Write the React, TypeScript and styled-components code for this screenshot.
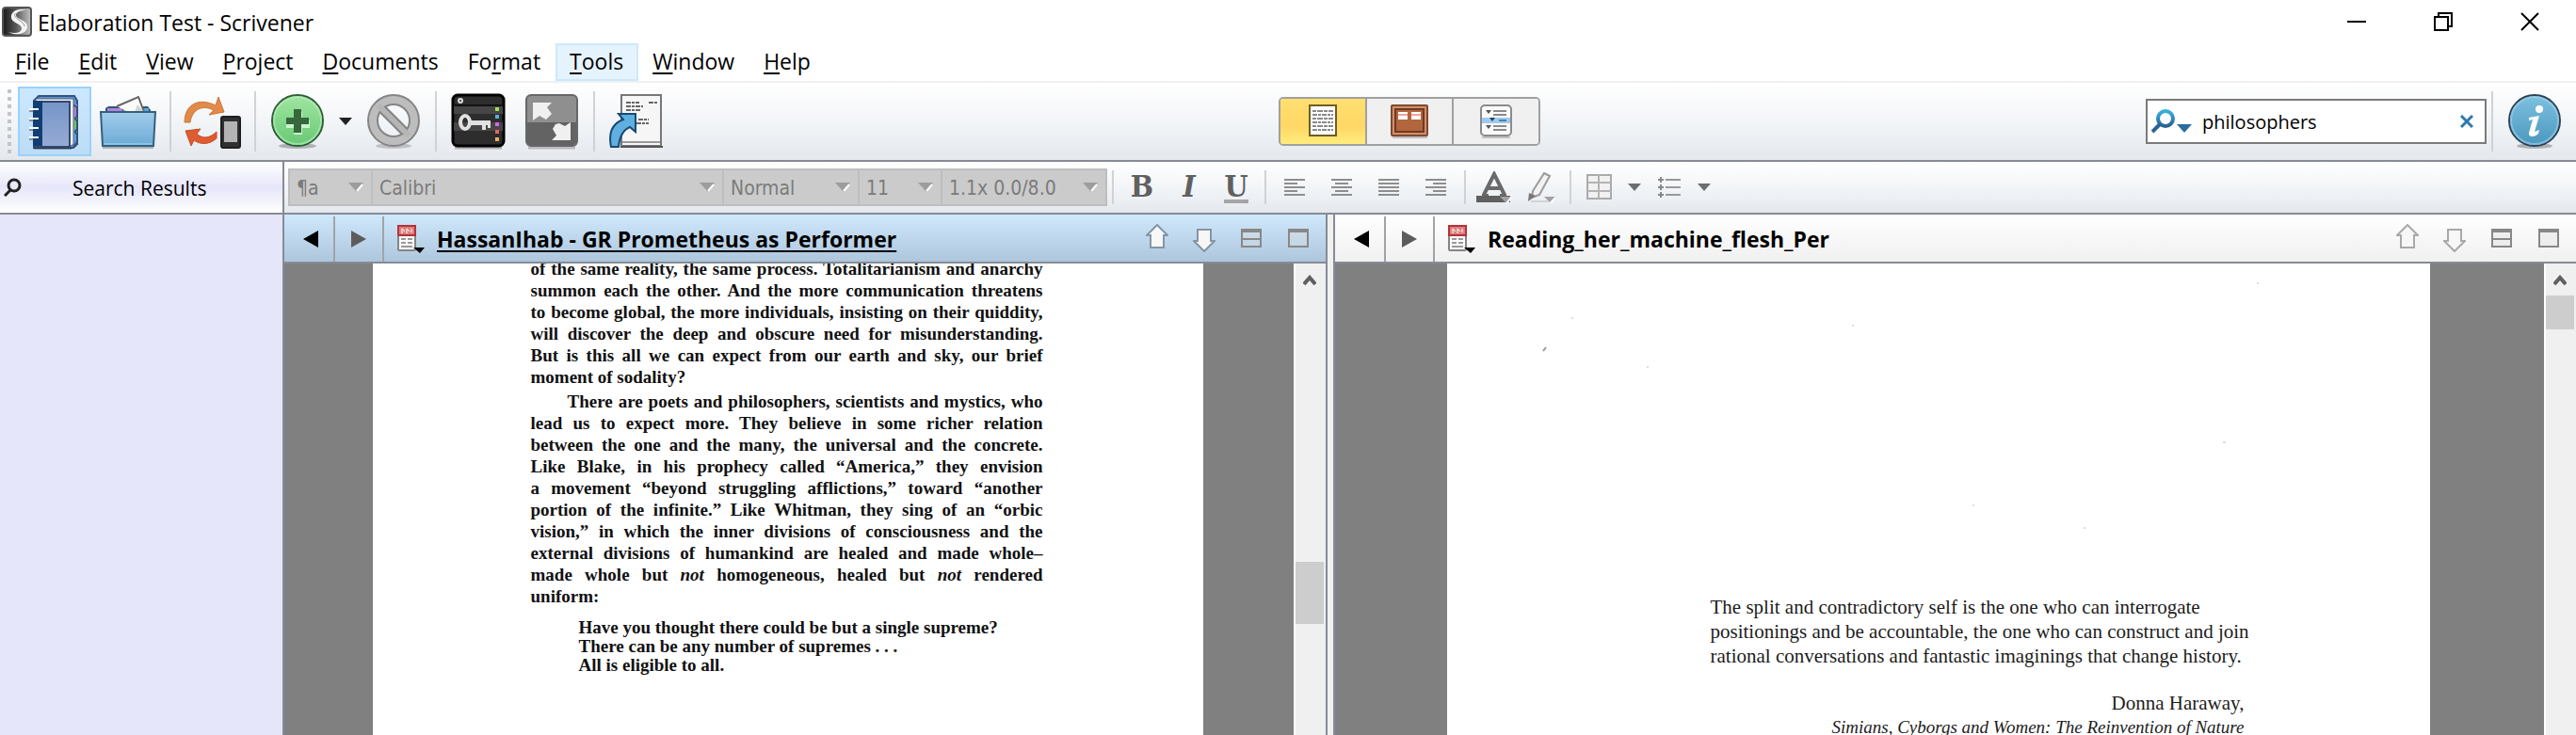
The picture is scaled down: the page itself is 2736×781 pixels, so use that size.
import React from 'react';
import styled, { createGlobalStyle, css } from 'styled-components';

const LINE = '#868b96';
const UI = '"Open Sans", "Noto Sans", sans-serif';
const NARROW = '"DejaVu Sans Condensed", "DejaVu Sans", sans-serif';
const SERIF = '"Liberation Serif", serif';

const GlobalStyle = createGlobalStyle`
  *, *::before, *::after { box-sizing: border-box; }
  html, body, #root { height: 100%; }
  body { margin: 0; background: #fff; color: #000; font-family: ${UI}; font-size: 23px; overflow: hidden; }
  button { border: 0; padding: 0; background: none; color: inherit; font: inherit; }
  svg { display: block; }
`;

const Window = styled.div`
  display: flex;
  flex-direction: column;
  height: 100vh;
`;

/* ---------- title bar and menus ---------- */

const TitleBar = styled.header`
  display: flex;
  align-items: center;
  height: 46px;
  padding: 0 3px 0 2px;
`;

const WindowTitle = styled.h1`
  flex: 1;
  margin: 0 0 0 6px;
  padding-top: 2px;
  font-size: 23px;
  font-weight: 400;
  line-height: 44px;
`;

const WindowButton = styled.button`
  display: grid;
  place-items: center;
  width: 92px;
  height: 44px;
`;

const MenuBar = styled.nav`
  display: flex;
  height: 42px;
  padding-left: 1px;
  border-bottom: 2px solid #f0f0f0;
`;

const MenuButton = styled.button<{ $active?: boolean }>`
  height: 40px;
  padding: 0 14px 2px 13px;
  border: 2px solid ${p => (p.$active ? '#cce8ff' : 'transparent')};
  background: ${p => (p.$active ? '#e5f3ff' : 'transparent')};
  line-height: 34px;

  u {
    text-decoration-thickness: 2px;
    text-underline-offset: 3px;
  }
`;

/* ---------- main toolbar ---------- */

const barFill = css`
  background: linear-gradient(#ffffff, #f1f4f7 55%, #e4e8ed);
  border-bottom: 2px solid ${LINE};
`;

const Toolbar = styled.div`
  ${barFill}
  display: flex;
  align-items: center;
  justify-content: space-between;
  height: 84px;
  padding: 0 8px;
`;

const ToolGroup = styled.div`
  display: flex;
  align-items: center;
`;

const Grip = styled.span`
  width: 4px;
  height: 68px;
  margin-right: 7px;
  background: repeating-linear-gradient(#c3c5c8 0 4px, transparent 4px 8px);
`;

const ToolButton = styled.button<{ $active?: boolean }>`
  display: grid;
  place-items: center;
  width: 78px;
  height: 74px;
  ${p =>
    p.$active &&
    css`
      border: 2px solid #99d1ff;
      background: linear-gradient(#cce8ff, #bcdcf5);
    `}
`;

const CaretButton = styled.button`
  display: grid;
  place-items: center;
  width: 24px;
  height: 40px;
`;

const Divider = styled.span<{ $tall?: boolean }>`
  width: 2px;
  height: ${p => (p.$tall ? 64 : 36)}px;
  margin: 0 5px;
  background: #d0d2d5;
`;

const ViewSwitch = styled.div`
  display: flex;
  height: 52px;
  border: 2px solid #a0a0a0;
  border-radius: 5px;
  overflow: hidden;
`;

const ViewButton = styled.button<{ $active?: boolean }>`
  display: grid;
  place-items: center;
  width: 92px;
  background: ${p => (p.$active ? 'linear-gradient(#ffe070, #ffd766 60%, #ffec7c)' : '#f0f0f0')};

  & + & {
    border-left: 2px solid #a0a0a0;
  }

  &:first-child {
    width: 90px;
  }
`;

const SearchBox = styled.label`
  display: flex;
  align-items: center;
  width: 362px;
  height: 48px;
  padding: 0 12px 0 4px;
  border: 2px solid #7a7a7a;
  background: #fff;
`;

const SearchInput = styled.input`
  flex: 1;
  min-width: 0;
  margin-left: 10px;
  padding: 2px 0 0;
  border: 0;
  outline: 0;
  background: none;
  color: #000;
  font: 20px/28px ${UI};
`;

const InfoButton = styled.button`
  display: grid;
  place-items: center;
  width: 56px;
  height: 60px;
  margin: 0 8px 0 11px;
`;

/* ---------- workspace ---------- */

const Workspace = styled.div`
  display: flex;
  flex: 1;
  min-height: 0;
`;

const Sidebar = styled.aside`
  flex: 0 0 302px;
  border-right: 2px solid ${LINE};
  background: #e6e6fa;
`;

const SidebarHeader = styled.div`
  display: flex;
  align-items: center;
  height: 56px;
  padding-left: 4px;
  border-bottom: 2px solid ${LINE};
  background: linear-gradient(#ffffff, #e6e6fa 50%, #ffffff);
`;

const SidebarTitle = styled.h2`
  margin: 0 0 0 54px;
  padding-top: 2px;
  font-size: 21px;
  font-weight: 400;
  line-height: 28px;
`;

const Main = styled.main`
  display: flex;
  flex: 1;
  flex-direction: column;
  min-width: 0;
`;

const FormatBar = styled.div`
  ${barFill}
  display: flex;
  align-items: center;
  height: 56px;
  padding-left: 4px;
`;

const Combos = styled.div`
  display: flex;
  height: 40px;
  border: 2px solid #bebebe;
  background: #cbcbcb;
`;

const Combo = styled.label<{ $width: number }>`
  display: grid;
  align-items: center;
  width: ${p => p.$width}px;

  & + & {
    border-left: 2px solid #bebebe;
  }

  > * {
    grid-area: 1 / 1;
  }

  > svg {
    justify-self: end;
    margin-right: 8px;
    pointer-events: none;
  }
`;

const Select = styled.select`
  width: 100%;
  height: 36px;
  padding: 2px 0 0 7px;
  border: 0;
  background: none;
  appearance: none;
  color: #7b7b7b;
  opacity: 1;
  font: 21px/34px ${NARROW};
`;

const FormatButton = styled.button`
  display: grid;
  place-items: center;
  width: 50px;
  height: 40px;
  color: #8a8a8a;
`;

const Letter = styled.span<{ $italic?: boolean; $underline?: boolean }>`
  height: 34px;
  border-bottom: 4px solid ${p => (p.$underline ? '#a5a5a5' : 'transparent')};
  color: #606060;
  font: ${p => (p.$italic ? 'italic' : 'normal')} bold 32px/32px 'DejaVu Serif Condensed', 'DejaVu Serif', serif;
`;

/* ---------- editor panes ---------- */

const Panes = styled.div`
  display: flex;
  flex: 1;
  min-height: 0;
`;

const Splitter = styled.div`
  flex: 0 0 10px;
  border: solid ${LINE};
  border-width: 0 2px;
  background: #f0f0f0;
`;

const PaneBox = styled.section<{ $grow: number }>`
  display: flex;
  flex: ${p => p.$grow} 1 0;
  flex-direction: column;
  min-width: 0;
`;

const PaneHeader = styled.div<{ $active?: boolean }>`
  display: flex;
  align-items: center;
  flex: 0 0 52px;
  padding-right: 4px;
  border-bottom: 2px solid ${LINE};
  background: ${p => (p.$active ? 'linear-gradient(#cfe8fc, #adc6dc)' : 'linear-gradient(#ffffff, #f0f0f0)')};
`;

const NavButton = styled.button`
  display: grid;
  place-items: center;
  width: 52px;
  height: 48px;
  margin-top: 2px;
  border-right: 2px solid #a0a4a8;

  &:first-child {
    width: 54px;
    padding-left: 4px;
  }
`;

const DocButton = styled.button`
  margin-left: 13px;
`;

const PaneTitle = styled.h2<{ $active?: boolean }>`
  flex: 1;
  min-width: 0;
  margin: 0 0 0 13px;
  padding-top: 2px;
  overflow: hidden;
  font-size: 23px;
  font-weight: 700;
  line-height: 40px;
  white-space: nowrap;
  text-decoration: ${p => (p.$active ? 'underline 2px' : 'none')};
  text-underline-offset: 3px;
  text-decoration-skip-ink: none;
`;

const PaneButton = styled.button`
  display: grid;
  place-items: center;
  width: 50px;
  height: 44px;
`;

const PaneBody = styled.div`
  display: flex;
  flex: 1;
  min-height: 0;
  background: #808080;
`;

const Desk = styled.div`
  display: flex;
  flex: 1;
  justify-content: center;
  min-width: 0;
  padding-right: 3px;
  overflow: hidden;
`;

const ScrollTrack = styled.div`
  flex: 0 0 34px;
  padding-top: 12px;
  border-left: 2px solid #fff;
  background: #f0f0f0;

  > svg {
    margin-left: 8px;
  }
`;

const ScrollThumb = styled.div<{ $gap: number; $size: number }>`
  width: 30px;
  height: ${p => p.$size}px;
  margin-top: ${p => p.$gap}px;
  background: #cdcdcd;
`;

const EssayPage = styled.article`
  width: 882px;
  padding: 0 170px 0 168px;
  background: #fff;
  color: #111;
  font: bold 19px/23px ${SERIF};
`;

const EssayParagraph = styled.p<{ $indent?: boolean }>`
  margin: ${p => (p.$indent ? '3px 0 0' : '-6px 0 0')};
  text-indent: ${p => (p.$indent ? 39 : 0)}px;
`;

const EssayLine = styled.span`
  display: block;
  text-align: justify;
  text-align-last: justify;
  white-space: nowrap;

  & + & {
    text-indent: 0;
  }

  &:last-child {
    text-align-last: left;
  }
`;

const Verse = styled.blockquote`
  margin: 12px 0 0 51px;
  line-height: 20px;
  white-space: pre-line;
`;

const ScanPage = styled.article`
  position: relative;
  width: 1044px;
  padding: 352px 197px 0 280px;
  background: #fff;
  color: #1c1c1c;
  font: 21px/26px ${SERIF};
`;

const Dust = styled.svg`
  position: absolute;
  inset: 0;
`;

const Epigraph = styled.p`
  margin: 0;
  white-space: pre;
`;

const Attribution = styled.footer`
  margin-top: 24px;
  text-align: right;
  white-space: nowrap;

  cite {
    display: block;
    font-size: 19px;
  }
`;

/* ---------- icons ---------- */

const AppIcon = () => (
  <svg width="32" height="32" viewBox="0 0 32 32">
    <defs>
      <linearGradient id="app" x1="0" y1="0" x2="1" y2="0">
        <stop offset="0" stopColor="#1a1a1a" />
        <stop offset="0.45" stopColor="#555" />
        <stop offset="1" stopColor="#c4c4c4" />
      </linearGradient>
    </defs>
    <rect x="1" y="1" width="30" height="30" rx="3" fill="url(#app)" stroke="#555" strokeWidth="2" />
    <path d="M26 4C16 1 9 6 10 12c1 6 12 6 11 12-1 4-7 5-14 3 7 4 19 3 20-5 1-8-12-8-12-13 0-4 6-5 11-5z" fill="#f4f4f4" />
    <path d="M14 7c-3 6 10 8 10 14" stroke="#999" fill="none" />
  </svg>
);

const Caret = ({ color = '#222', w = 14 }: { color?: string; w?: number }) => (
  <svg width={w} height="8" viewBox="0 0 14 8">
    <path d="M0 0h14L7 8z" fill={color} />
  </svg>
);

const ComboCaret = () => (
  <svg width="16" height="12" viewBox="0 0 16 12">
    <path d="M0 1h16L9 11z" fill="#9d9d9d" />
    <path d="M15 3L9 10" stroke="#fff" strokeWidth="2" />
  </svg>
);

const NotebookIcon = () => (
  <svg width="56" height="60" viewBox="0 0 56 60">
    <defs>
      <linearGradient id="nb" x1="0" y1="0" x2="0" y2="1">
        <stop offset="0" stopColor="#7695c9" />
        <stop offset="1" stopColor="#96abd4" />
      </linearGradient>
    </defs>
    <path d="M6 8l5-5h38l3 5v46l-4 4H6z" fill="#5d93d6" stroke="#36517a" strokeWidth="2" />
    <path d="M48 12h4v14h-4z" fill="#b07fd8" />
    <path d="M48 26h4v12h-4z" fill="#74c463" />
    <path d="M48 38h4v12h-4z" fill="#58a6e0" />
    <path d="M47 12l5 3v9l-2 3 2 3v8l-2 3 2 3v8l-4 5" fill="none" stroke="#35516f" strokeWidth="2" />
    <path d="M8 6h40v48l-4 3H8z" fill="#f7f7f7" stroke="#4a6080" />
    <rect x="6" y="9" width="38" height="48" fill="url(#nb)" stroke="#33486d" strokeWidth="2" />
    <rect x="5" y="8" width="10" height="48" fill="#123f73" />
    {[17, 27, 37, 47].map(y => (
      <path key={y} d={`M1 ${y}h10`} stroke="#fff" strokeWidth="2" />
    ))}
    {[19, 29, 39, 49].map(y => (
      <path key={y} d={`M1 ${y}h5`} stroke="#444" strokeWidth="1" />
    ))}
    <path d="M6 59h40" stroke="#000" strokeOpacity="0.3" strokeWidth="2" />
  </svg>
);

const FolderIcon = () => (
  <svg width="60" height="60" viewBox="0 0 60 60">
    <defs>
      <linearGradient id="fold" x1="0" y1="0" x2="0" y2="1">
        <stop offset="0" stopColor="#a3cdea" />
        <stop offset="1" stopColor="#6baad6" />
      </linearGradient>
    </defs>
    <path d="M6 20v-4l3-2h42l3 4v4H6z" fill="#2c5878" />
    <path d="M8 16h16v5H8z" fill="#b381e0" />
    <path d="M25 16h14v5H25z" fill="#86cf78" />
    <path d="M42 16h10v5H42z" fill="#5aa6dd" />
    <path d="M18 14L41 4l6 16H31z" fill="#fbfbfb" />
    <path d="M18 14L41 4l6 16" fill="none" stroke="#666" strokeWidth="2" />
    <path d="M37 20l3-8 7 8z" fill="#d4d4d4" />
    <path d="M1 20h58l-2 36H3z" fill="url(#fold)" stroke="#35607f" strokeWidth="2" />
    <path d="M4 54h52" stroke="#86c3e8" strokeWidth="2" />
    <path d="M3 58h54" stroke="#000" strokeOpacity="0.25" strokeWidth="2" />
  </svg>
);

const SyncIcon = () => (
  <svg width="62" height="60" viewBox="0 0 62 60">
    <path d="M1 31C1 12 16 4 34 13l3-9 6 16-16 3 5-5C20 12 9 17 7 31z" fill="#e28a49" stroke="#cc7638" />
    <path d="M2 40l16-2-4 5c6 6 14 5 21-2v7c-8 7-17 7-24 2l-3 6z" fill="#df5b32" stroke="#c94a25" />
    <rect x="40" y="25" width="20" height="33" rx="2" fill="#303030" stroke="#1f1f1f" strokeWidth="2" />
    <rect x="43" y="30" width="14" height="22" fill="#b4b4b4" />
  </svg>
);

const AddIcon = () => (
  <svg width="58" height="60" viewBox="0 0 58 60">
    <defs>
      <linearGradient id="add" x1="0" y1="0" x2="0" y2="1">
        <stop offset="0" stopColor="#a0e6a2" />
        <stop offset="1" stopColor="#68c874" />
      </linearGradient>
    </defs>
    <ellipse cx="29" cy="56" rx="20" ry="3" fill="#000" opacity="0.25" />
    <circle cx="29" cy="29" r="27" fill="url(#add)" stroke="#2f5e38" strokeWidth="2" />
    <circle cx="29" cy="29" r="25" fill="none" stroke="#b9f0bc" strokeWidth="2" opacity="0.6" />
    <path d="M25 20h9v9h8v8h-8v7h-9v-7h-8v-8h8z" fill="#c7f5cf" />
    <path d="M25 17h8v9h8v7h-8v9h-8v-9h-8v-7h8z" fill="#38673b" />
  </svg>
);

const BanIcon = () => (
  <svg width="58" height="60" viewBox="0 0 58 60">
    <ellipse cx="29" cy="56" rx="19" ry="3" fill="#000" opacity="0.18" />
    <g fill="none">
      <circle cx="29" cy="29" r="22" stroke="#858585" strokeWidth="12" />
      <path d="M14 14l30 30" stroke="#858585" strokeWidth="10" />
      <circle cx="29" cy="29" r="22" stroke="#bdbdbd" strokeWidth="8" />
      <path d="M13 13l32 32" stroke="#b5b5b5" strokeWidth="6" />
    </g>
  </svg>
);

const KeywordsIcon = () => (
  <svg width="58" height="60" viewBox="0 0 58 60">
    <path d="M4 58h50" stroke="#000" strokeOpacity="0.25" strokeWidth="3" />
    <rect x="2" y="2" width="54" height="54" rx="5" fill="#2d2d2d" stroke="#000" strokeWidth="3" />
    <path d="M3 13h52v9H3zM3 31h52v9H3z" fill="#464646" />
    <path d="M3 13h52" stroke="#111" strokeWidth="2" />
    <circle cx="10" cy="8" r="2" fill="none" stroke="#ddd" strokeWidth="2" />
    <ellipse cx="15" cy="31" rx="5" ry="7" fill="none" stroke="#e2e2e2" strokeWidth="4" />
    <path d="M20 29h22v8h-3v-3h-2v5h-4v-5H20z" fill="#e2e2e2" />
    {['#9fdc59', '#5aaee6', '#d467e8', '#ee6060', '#ecb05a'].map((c, i) => (
      <rect key={c} x="47" y={15 + i * 8} width="4" height="4" fill={c} />
    ))}
  </svg>
);

const FullScreenIcon = () => (
  <svg width="58" height="60" viewBox="0 0 58 60">
    <path d="M4 58h50" stroke="#000" strokeOpacity="0.2" strokeWidth="3" />
    <rect x="2" y="2" width="54" height="54" rx="5" fill="#8f8f8f" stroke="#676767" strokeWidth="2" />
    <path d="M3 31h52v22l-3 2H5l-2-2z" fill="#636363" />
    <path d="M9 10h20l-5 5 5 7-6 6-7-4-7 5z" fill="#f0f0f0" />
    <path d="M49 50H29l5-5-4-7 3-5 4-1 6 3 6-4z" fill="#f0f0f0" />
  </svg>
);

const ComposeIcon = () => (
  <svg width="60" height="60" viewBox="0 0 60 60">
    <rect x="14" y="2" width="42" height="54" fill="#f6f6f6" stroke="#777" strokeWidth="2" />
    <path d="M15 52h40" stroke="#999" strokeWidth="2" />
    <path d="M13 57h45" stroke="#555" strokeWidth="2" />
    <path d="M19 10h14M43 10h9M19 14h18M19 18h15M32 28h11M30 32h13" stroke="#666" strokeWidth="2" strokeDasharray="5 1 3 1" />
    <path d="M3 57C0 42 5 32 16 28l-5-6h18v19l-6-5c-7 3-11 10-12 21z" fill="#5fb0e0" stroke="#174a75" strokeWidth="2" />
  </svg>
);

const DocumentViewIcon = () => (
  <svg width="32" height="36" viewBox="0 0 32 36">
    <rect x="2" y="1" width="28" height="32" fill="#fff" stroke="#6f5d22" strokeWidth="2" />
    {[7, 11, 15, 19, 23, 27].map((y, i) => (
      <path key={y} d={`M5 ${y}h22`} stroke="#8a8a8a" strokeWidth="2" strokeDasharray={i % 2 ? '5 1 3 1' : '4 1 6 1'} />
    ))}
  </svg>
);

const CorkboardIcon = () => (
  <svg width="40" height="36" viewBox="0 0 40 36">
    <rect x="1" y="1" width="38" height="32" rx="1" fill="#d48d6a" stroke="#7c4a33" strokeWidth="2" />
    <rect x="5" y="5" width="30" height="24" fill="#b2663d" stroke="#6e3a22" strokeWidth="2" />
    <path d="M8 8h10v8H8zM22 8h10v8H22z" fill="#fff" />
    <path d="M8 11h10M22 11h10" stroke="#eda5a0" strokeWidth="2" />
    <path d="M2 35h37" stroke="#000" strokeOpacity="0.2" strokeWidth="2" />
  </svg>
);

const OutlineIcon = () => (
  <svg width="34" height="36" viewBox="0 0 34 36">
    <rect x="1" y="1" width="32" height="32" rx="4" fill="#fafafa" stroke="#8b8b8b" strokeWidth="2" />
    <rect x="2" y="14" width="30" height="6" fill="#9ccbf0" />
    <path d="M6 6h6l-3 4zM6 22h6l-3 4z" fill="#555" />
    <path d="M10 14h6l-3 4z" fill="#27405c" />
    <path d="M14 7h14M14 11h14M14 23h14M14 27h14" stroke="#8a8a8a" strokeWidth="2" />
    <path d="M20 17h8" stroke="#5a7f9e" strokeWidth="2" />
    <path d="M2 35h30" stroke="#000" strokeOpacity="0.2" strokeWidth="2" />
  </svg>
);

const SearchIcon = () => (
  <svg width="44" height="28" viewBox="0 0 44 28">
    <defs>
      <linearGradient id="lens" x1="0" y1="0" x2="0" y2="1">
        <stop offset="0" stopColor="#36b0de" />
        <stop offset="1" stopColor="#2a6293" />
      </linearGradient>
    </defs>
    <circle cx="15" cy="11" r="8" fill="none" stroke="url(#lens)" strokeWidth="4" />
    <path d="M9 17l-8 8" stroke="#2a6293" strokeWidth="4" />
    <path d="M27 17h16l-8 9z" fill="#2a6ca0" />
  </svg>
);

const ClearIcon = () => (
  <svg width="14" height="14" viewBox="0 0 14 14">
    <path d="M1 1l12 12M13 1L1 13" stroke="#2f78ac" strokeWidth="3" />
  </svg>
);

const InfoIcon = () => (
  <svg width="56" height="58" viewBox="0 0 56 58">
    <defs>
      <linearGradient id="info" x1="0" y1="0" x2="0" y2="1">
        <stop offset="0" stopColor="#7fc1e0" />
        <stop offset="1" stopColor="#4a97be" />
      </linearGradient>
    </defs>
    <ellipse cx="28" cy="55" rx="19" ry="3" fill="#000" opacity="0.25" />
    <circle cx="28" cy="28" r="27" fill="url(#info)" stroke="#2e4257" strokeWidth="2" />
    <circle cx="28" cy="28" r="25" fill="none" stroke="#a3d5ec" strokeWidth="2" opacity="0.6" />
    <circle cx="33" cy="16" r="4" fill="#fff" />
    <path d="M22 25l11-2-5 17 5-2-1 4c-4 4-11 4-10-1l4-14-4 1z" fill="#fff" />
  </svg>
);

const LensIcon = () => (
  <svg width="19" height="20" viewBox="0 0 19 20">
    <circle cx="11" cy="8" r="6" fill="none" stroke="#222" strokeWidth="3" />
    <path d="M7 13l-6 6" stroke="#222" strokeWidth="3" />
  </svg>
);

const alignments: Record<string, [number, number][]> = {
  left: [[0, 22], [0, 14], [0, 22], [0, 14], [0, 22]],
  center: [[0, 22], [4, 14], [0, 22], [4, 14], [0, 22]],
  justify: [[0, 22], [0, 22], [0, 22], [0, 22], [0, 22]],
  right: [[0, 22], [8, 14], [0, 22], [8, 14], [0, 22]],
};

const AlignIcon = ({ kind }: { kind: string }) => (
  <svg width="22" height="18" viewBox="0 0 22 18">
    {alignments[kind].map(([x, w], i) => (
      <rect key={i} x={x} y={i * 4} width={w} height="2" fill="#8e8e8e" />
    ))}
  </svg>
);

const TextColorIcon = () => (
  <svg width="38" height="34" viewBox="0 0 38 34">
    <path d="M8 25L19 3l11 22M13 18h13" fill="none" stroke="#6a6a6a" strokeWidth="4" />
    <path d="M6 25h7M25 25h7" stroke="#6a6a6a" strokeWidth="2" />
    <rect x="0" y="26" width="36" height="7" fill="#606060" />
    <path d="M25 27h12l-6 6z" fill="#a2a2a2" />
    <path d="M37 28l-5 6" stroke="#fff" strokeWidth="2" />
  </svg>
);

const HighlightIcon = () => (
  <svg width="34" height="34" viewBox="0 0 34 34">
    <path d="M20 2l6 3-11 20-8 3 1-7z" fill="#f2f2f2" stroke="#9a9a9a" strokeWidth="2" />
    <path d="M4 23l7 3-8 6z" fill="#777" />
    <path d="M6 32h18" stroke="#d2d2d2" strokeWidth="2" />
    <path d="M20 27h12l-6 6z" fill="#a2a2a2" />
    <path d="M32 28l-5 6" stroke="#fff" strokeWidth="2" />
  </svg>
);

const TableIcon = () => (
  <svg width="28" height="28" viewBox="0 0 28 28">
    <rect x="1" y="1" width="25" height="25" fill="#f1f1f1" stroke="#aaa" strokeWidth="2" />
    <path d="M1 9h25M1 18h25M13 1v25" stroke="#b4b4b4" strokeWidth="2" />
  </svg>
);

const ListIcon = () => (
  <svg width="24" height="22" viewBox="0 0 24 22">
    <path d="M0 3h6M3 0v6M0 11h6M3 8v6M0 19h6M3 16v6" stroke="#888" strokeWidth="2" />
    <path d="M8 3h16M8 11h16M8 19h16" stroke="#999" strokeWidth="2" />
  </svg>
);

const PdfIcon = () => (
  <svg width="30" height="32" viewBox="0 0 30 32">
    <rect x="2" y="3" width="18" height="26" rx="1" fill="#fafafa" stroke="#858585" strokeWidth="2" />
    <rect x="2" y="3" width="18" height="10" fill="#dd8080" stroke="#b33237" strokeWidth="2" />
    <path d="M6 11V6l3 3M11 11V6l3 3M16 6v4" stroke="#fff" strokeWidth="1" fill="none" />
    <path d="M5 17h5M12 17h5M5 21h5M12 21h5M5 25h12" stroke="#999" strokeWidth="2" />
    <path d="M18 26h12l-5 6z" fill="#000" />
  </svg>
);

const Triangle = ({ back }: { back?: boolean }) => (
  <svg width="18" height="18" viewBox="0 0 18 18">
    <path d={back ? 'M17 0v18L1 9z' : 'M1 0v18l16-9z'} fill={back ? '#000' : '#5c5c5c'} />
  </svg>
);

const BlockArrow = ({ down, stroke }: { down?: boolean; stroke: string }) => (
  <svg width="24" height="30" viewBox="0 0 24 30">
    <path
      d={down ? 'M5 6h14v12h4L12 29 1 18h4z' : 'M12 1l11 11h-4v13H5V12H1z'}
      fill="#f7f7f7"
      stroke={stroke}
      strokeWidth="2"
    />
  </svg>
);

const FrameIcon = ({ split }: { split?: boolean }) => (
  <svg width="22" height="20" viewBox="0 0 22 20">
    <path d="M1 2h20v17H1z" fill="#dcdcdc" fillOpacity="0.35" stroke="#888" strokeWidth="2" />
    <path d="M0 2h22" stroke="#888" strokeWidth="4" />
    {split && <path d="M1 11h20" stroke="#888" strokeWidth="2" />}
  </svg>
);

const ScrollUp = () => (
  <svg width="14" height="12" viewBox="0 0 14 12">
    <path d="M1 10l6-7 6 7" fill="none" stroke="#606060" strokeWidth="4" />
  </svg>
);

/* ---------- content ---------- */

const menus = [
  ['', 'F', 'ile'],
  ['', 'E', 'dit'],
  ['', 'V', 'iew'],
  ['', 'P', 'roject'],
  ['', 'D', 'ocuments'],
  ['Fo', 'r', 'mat'],
  ['', 'T', 'ools'],
  ['', 'W', 'indow'],
  ['', 'H', 'elp'],
];

const combos: [string, string, number][] = [
  ['Style', '¶a', 86],
  ['Font', 'Calibri', 373],
  ['Typeface', 'Normal', 144],
  ['Size', '11', 88],
  ['Line spacing', '1.1x 0.0/8.0', 175],
];

const opening = [
  'of the same reality, the same process. Totalitarianism and anarchy',
  'summon each the other. And the more communication threatens',
  'to become global, the more individuals, insisting on their quiddity,',
  'will discover the deep and obscure need for misunderstanding.',
  'But is this all we can expect from our earth and sky, our brief',
  'moment of sodality?',
];

const poets: React.ReactNode[] = [
  'There are poets and philosophers, scientists and mystics, who',
  'lead us to expect more. They believe in some richer relation',
  'between the one and the many, the universal and the concrete.',
  'Like Blake, in his prophecy called “America,” they envision',
  'a movement “beyond struggling afflictions,” toward “another',
  'portion of the infinite.” Like Whitman, they sing of an “orbic',
  'vision,” in which the inner divisions of consciousness and the',
  'external divisions of humankind are healed and made whole–',
  <>made whole but <em>not</em> homogeneous, healed but <em>not</em> rendered</>,
  'uniform:',
];

const verse = `Have you thought there could be but a single supreme?
There can be any number of supremes . . .
All is eligible to all.`;

const epigraph = `The split and contradictory self is the one who can interrogate
positionings and be accountable, the one who can construct and join
rational conversations and fantastic imaginings that change history.`;

type PaneProps = {
  title: string;
  grow: number;
  active?: boolean;
  thumbGap: number;
  thumbSize: number;
  children: React.ReactNode;
};

const Pane = ({ title, grow, active, thumbGap, thumbSize, children }: PaneProps) => {
  const outline = active ? '#8496a5' : '#a9a9a9';
  return (
    <PaneBox $grow={grow}>
      <PaneHeader $active={active}>
        <NavButton aria-label="Back"><Triangle back /></NavButton>
        <NavButton aria-label="Forward"><Triangle /></NavButton>
        <DocButton aria-label="Item actions"><PdfIcon /></DocButton>
        <PaneTitle $active={active}>{title}</PaneTitle>
        <PaneButton aria-label="Previous document"><BlockArrow stroke={outline} /></PaneButton>
        <PaneButton aria-label="Next document"><BlockArrow down stroke={outline} /></PaneButton>
        <PaneButton aria-label="Split horizontally"><FrameIcon split /></PaneButton>
        <PaneButton aria-label="No split"><FrameIcon /></PaneButton>
      </PaneHeader>
      <PaneBody>
        <Desk>{children}</Desk>
        <ScrollTrack>
          <ScrollUp />
          <ScrollThumb $gap={thumbGap} $size={thumbSize} />
        </ScrollTrack>
      </PaneBody>
    </PaneBox>
  );
};

export default function App() {
  return (
    <Window>
      <GlobalStyle />
      <TitleBar>
        <AppIcon />
        <WindowTitle>Elaboration Test - Scrivener</WindowTitle>
        <WindowButton aria-label="Minimize">
          <svg width="20" height="20" viewBox="0 0 20 20"><path d="M0 10h20" stroke="#000" strokeWidth="2" /></svg>
        </WindowButton>
        <WindowButton aria-label="Restore">
          <svg width="20" height="20" viewBox="0 0 20 20" fill="none" stroke="#000" strokeWidth="2">
            <path d="M1 5h14v14H1zM5 5V1h14v14h-4" />
          </svg>
        </WindowButton>
        <WindowButton aria-label="Close">
          <svg width="20" height="20" viewBox="0 0 20 20"><path d="M1 1l18 18M19 1L1 19" stroke="#000" strokeWidth="2" /></svg>
        </WindowButton>
      </TitleBar>

      <MenuBar>
        {menus.map(([before, key, after]) => (
          <MenuButton key={before + key + after} $active={key === 'T'}>
            {before}<u>{key}</u>{after}
          </MenuButton>
        ))}
      </MenuBar>

      <Toolbar>
        <ToolGroup>
          <Grip />
          <ToolButton $active aria-label="Binder"><NotebookIcon /></ToolButton>
          <ToolButton aria-label="Collections"><FolderIcon /></ToolButton>
          <Divider $tall />
          <ToolButton aria-label="Sync"><SyncIcon /></ToolButton>
          <Divider $tall />
          <ToolButton aria-label="Add"><AddIcon /></ToolButton>
          <CaretButton aria-label="Add options"><Caret /></CaretButton>
          <ToolButton aria-label="Trash"><BanIcon /></ToolButton>
          <Divider $tall />
          <ToolButton aria-label="Keywords"><KeywordsIcon /></ToolButton>
          <ToolButton aria-label="Full screen"><FullScreenIcon /></ToolButton>
          <Divider $tall />
          <ToolButton aria-label="Compile"><ComposeIcon /></ToolButton>
        </ToolGroup>
        <ViewSwitch>
          <ViewButton $active aria-label="Document view"><DocumentViewIcon /></ViewButton>
          <ViewButton aria-label="Corkboard"><CorkboardIcon /></ViewButton>
          <ViewButton aria-label="Outline"><OutlineIcon /></ViewButton>
        </ViewSwitch>
        <ToolGroup>
          <SearchBox>
            <SearchIcon />
            <SearchInput type="text" aria-label="Search" defaultValue="philosophers" />
            <button aria-label="Clear search"><ClearIcon /></button>
          </SearchBox>
          <Divider $tall />
          <InfoButton aria-label="Inspector"><InfoIcon /></InfoButton>
        </ToolGroup>
      </Toolbar>

      <Workspace>
        <Sidebar>
          <SidebarHeader>
            <LensIcon />
            <SidebarTitle>Search Results</SidebarTitle>
          </SidebarHeader>
        </Sidebar>

        <Main>
          <FormatBar>
            <Combos>
              {combos.map(([name, value, width]) => (
                <Combo key={name} $width={width}>
                  <Select disabled aria-label={name}>
                    <option>{value}</option>
                  </Select>
                  <ComboCaret />
                </Combo>
              ))}
            </Combos>
            <Divider />
            <FormatButton aria-label="Bold"><Letter>B</Letter></FormatButton>
            <FormatButton aria-label="Italic"><Letter $italic>I</Letter></FormatButton>
            <FormatButton aria-label="Underline"><Letter $underline>U</Letter></FormatButton>
            <Divider />
            {Object.keys(alignments).map(kind => (
              <FormatButton key={kind} aria-label={`Align ${kind}`}><AlignIcon kind={kind} /></FormatButton>
            ))}
            <Divider />
            <FormatButton aria-label="Text color"><TextColorIcon /></FormatButton>
            <FormatButton aria-label="Highlight"><HighlightIcon /></FormatButton>
            <Divider />
            <FormatButton aria-label="Table"><TableIcon /></FormatButton>
            <CaretButton aria-label="Table options"><Caret color="#6c6f72" /></CaretButton>
            <FormatButton aria-label="List"><ListIcon /></FormatButton>
            <CaretButton aria-label="List options"><Caret color="#6c6f72" /></CaretButton>
          </FormatBar>

          <Panes>
            <Pane title="HassanIhab - GR Prometheus as Performer" grow={1106} active thumbGap={293} thumbSize={66}>
              <EssayPage>
                <EssayParagraph>
                  {opening.map((line, i) => <EssayLine key={i}>{line}</EssayLine>)}
                </EssayParagraph>
                <EssayParagraph $indent>
                  {poets.map((line, i) => <EssayLine key={i}>{line}</EssayLine>)}
                </EssayParagraph>
                <Verse>{verse}</Verse>
              </EssayPage>
            </Pane>
            <Splitter />
            <Pane title="Reading_her_machine_flesh_Per" grow={1318} thumbGap={10} thumbSize={36}>
              <ScanPage>
                <Dust width="1044" height="500" viewBox="0 0 1044 500">
                  <path d="M102 93l3-4" stroke="#999" strokeWidth="2" />
                  <path d="M132 58h2M430 66h2M212 110h2M824 190h3M558 257h2M676 281h2M860 21h2" stroke="#ddd" strokeWidth="2" />
                </Dust>
                <Epigraph>{epigraph}</Epigraph>
                <Attribution>
                  Donna Haraway,
                  <cite>Simians, Cyborgs and Women: The Reinvention of Nature</cite>
                </Attribution>
              </ScanPage>
            </Pane>
          </Panes>
        </Main>
      </Workspace>
    </Window>
  );
}
